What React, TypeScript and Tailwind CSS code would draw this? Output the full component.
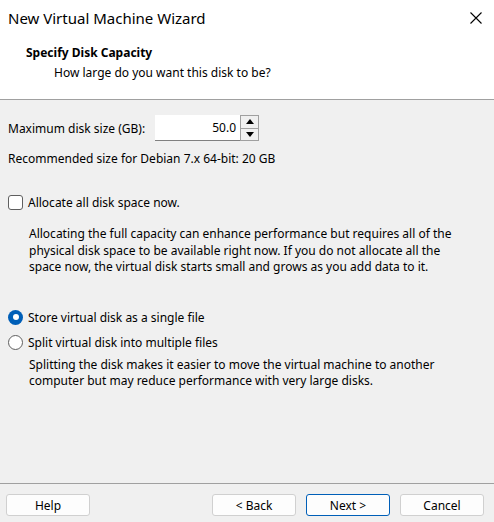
import React, { useState } from 'react';

function Spinner() {
  return (
    <div className="flex flex-col w-[19px] h-[26px] border border-[#a0a0a0] bg-[#f0f0f0]">
      <button className="flex-1 flex items-center justify-center border-b border-[#a0a0a0]">
        <svg width="8" height="5" viewBox="0 0 8 5">
          <path d="M0 5 L4 0 L8 5 Z" fill="#000" />
        </svg>
      </button>
      <button className="flex-1 flex items-center justify-center">
        <svg width="8" height="5" viewBox="0 0 8 5">
          <path d="M0 0 L4 5 L8 0 Z" fill="#000" />
        </svg>
      </button>
    </div>
  );
}

function Radio({ checked }: { checked: boolean }) {
  return checked ? (
    <span className="w-[15px] h-[15px] rounded-full bg-[#005fb8] flex items-center justify-center shrink-0">
      <span className="w-[6px] h-[6px] rounded-full bg-white" />
    </span>
  ) : (
    <span className="w-[15px] h-[15px] rounded-full border border-[#5f5f5f] bg-white shrink-0" />
  );
}

function WizardButton({ label, primary }: { label: string; primary?: boolean }) {
  return (
    <button
      className={
        'w-[84px] h-[22px] rounded-[3px] bg-[#fdfdfd] text-[12px] text-black border ' +
        (primary ? 'border-[#005fb8]' : 'border-[#d0d0d0]')
      }
    >
      {label}
    </button>
  );
}

export default function App() {
  const [single, setSingle] = useState(true);

  return (
    <div
      className="w-[494px] h-[522px] bg-[#f0f0f0] flex flex-col text-black text-[12px] leading-[17px]"
      style={{ fontFamily: '"Segoe UI", "Noto Sans", sans-serif' }}
    >
      {/* Title + header */}
      <div className="bg-white h-[100px] border-b border-[#a0a0a0] flex flex-col">
        <div className="flex items-center justify-between h-[36px] pl-[8px] pr-[12px]">
          <span className="text-[15px]">New Virtual Machine Wizard</span>
          <svg width="12" height="12" viewBox="0 0 12 12">
            <path d="M0.5 0.5 L11.5 11.5 M11.5 0.5 L0.5 11.5" stroke="#000" strokeWidth="1.1" />
          </svg>
        </div>
        <div className="pl-[26px] pt-[8px] font-bold">Specify Disk Capacity</div>
        <div className="pl-[54px] pt-[3px]">How large do you want this disk to be?</div>
      </div>

      {/* Body */}
      <div className="flex-1 flex flex-col pl-[8px] pr-[8px]">
        <div className="flex items-center mt-[15px] h-[26px]">
          <span className="w-[147px]">Maximum disk size (GB):</span>
          <div className="w-[85px] h-[26px] bg-white border-b border-[#808080] flex items-center justify-end pr-[4px]">
            50.0
          </div>
          <Spinner />
        </div>
        <div className="mt-[9px]">Recommended size for Debian 7.x 64-bit: 20 GB</div>

        <label className="flex items-center gap-[5px] mt-[27px]">
          <span className="w-[15px] h-[15px] rounded-[3px] border border-[#5f5f5f] bg-white shrink-0" />
          <span>Allocate all disk space now.</span>
        </label>
        <p className="pl-[21px] mt-[15px] leading-[16.5px]">
          Allocating the full capacity can enhance performance but requires all of the
          <br />
          physical disk space to be available right now. If you do not allocate all the
          <br />
          space now, the virtual disk starts small and grows as you add data to it.
        </p>

        <label className="flex items-center gap-[5px] mt-[33px]" onClick={() => setSingle(true)}>
          <Radio checked={single} />
          <span>Store virtual disk as a single file</span>
        </label>
        <label className="flex items-center gap-[5px] mt-[8px]" onClick={() => setSingle(false)}>
          <Radio checked={!single} />
          <span>Split virtual disk into multiple files</span>
        </label>
        <p className="pl-[21px] mt-[6px] leading-[16.5px]">
          Splitting the disk makes it easier to move the virtual machine to another
          <br />
          computer but may reduce performance with very large disks.
        </p>
      </div>

      {/* Footer */}
      <div className="h-[39px] border-t border-[#a0a0a0] flex items-start pt-[10px] pl-[6px] pr-[10px]">
        <WizardButton label="Help" />
        <div className="flex-1" />
        <div className="flex gap-[10px]">
          <WizardButton label="< Back" />
          <WizardButton label="Next >" primary />
          <WizardButton label="Cancel" />
        </div>
      </div>
    </div>
  );
}
